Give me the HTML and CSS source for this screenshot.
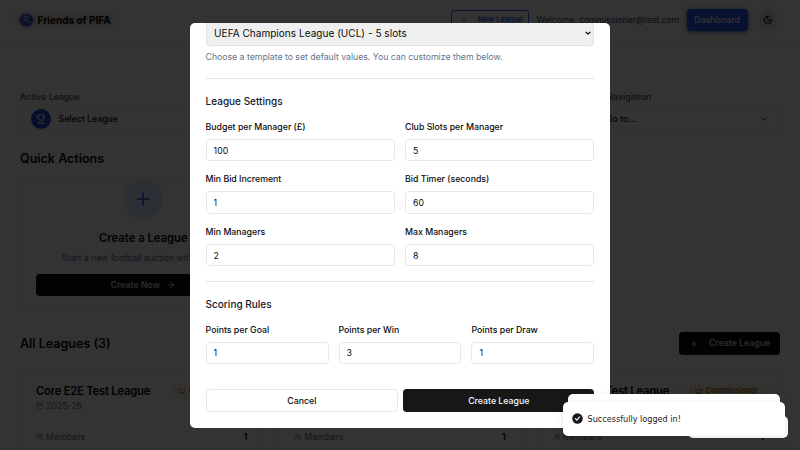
FILE: index.html
```html
<!DOCTYPE html>
<html lang="en">
<head>
<meta charset="utf-8">
<title>Friends of PIFA</title>
<link rel="stylesheet" href="styles.css">
</head>
<body>
<svg class="defs" aria-hidden="true">
  <symbol id="users" viewBox="0 0 24 24"><path d="M18 21a8 8 0 0 0-16 0"/><circle cx="10" cy="8" r="5"/><path d="M22 20c0-3.370-2-6.500-4-8a5 5 0 0 0-.45-8.300"/></symbol>
  <symbol id="logo" viewBox="0 0 24 24"><path d="M16 21v-2a4 4 0 0 0-4-4H6a4 4 0 0 0-4 4v2"/><rect x="5" y="3" width="8" height="8" rx="3"/><path d="M22 21v-2a4 4 0 0 0-3-3.870M16 3.130a4 4 0 0 1 0 7.750"/></symbol>
  <symbol id="trophy" viewBox="0 0 24 24"><path d="M6 9H4.500a2.500 2.500 0 0 1 0-5H6M18 9h1.500a2.500 2.500 0 0 0 0-5H18M4 22h16M10 14.660V17c0 .55-.47.98-.97 1.210C7.850 18.750 7 20.240 7 22M14 14.660V17c0 .55.47.98.97 1.210C16.150 18.750 17 20.240 17 22M18 2H6v7a6 6 0 0 0 12 0V2Z"/></symbol>
  <symbol id="plus" viewBox="0 0 24 24"><path d="M5 12h14M12 5v14"/></symbol>
  <symbol id="arrow" viewBox="0 0 24 24"><path d="M5 12h14M12 5l7 7-7 7"/></symbol>
  <symbol id="chevron" viewBox="0 0 24 24"><path d="m6 9 6 6 6-6"/></symbol>
  <symbol id="moon" viewBox="0 0 24 24"><path d="M12 3a6 6 0 0 0 9 9 9 9 0 1 1-9-9Z"/></symbol>
  <symbol id="calendar" viewBox="0 0 24 24"><path d="M8 2v4M16 2v4M3 10h18"/><rect x="3" y="4" width="18" height="18" rx="2"/></symbol>
  <symbol id="crown" viewBox="0 0 24 24"><path d="m2 6 5 5 5-8 5 8 5-5-3 12H5ZM5 21h14"/></symbol>
</svg>

<div class="page">
  <header class="header">
    <div class="brand"><span class="brand-mark"><svg><use href="#logo"/></svg></span><span>Friends of PIFA</span></div>
    <div class="header-actions">
      <span class="btn-outline"><svg><use href="#plus"/></svg>New League</span>
      <span class="welcome">Welcome, commissioner@test.com</span>
      <span class="btn-primary">Dashboard</span>
      <span class="theme"><svg><use href="#moon"/></svg></span>
    </div>
  </header>
  <main class="main">
    <div class="pickers">
      <div class="picker picker-wide">
        <div class="picker-label">Active League</div>
        <div class="picker-box"><span class="trophy"><svg><use href="#trophy"/></svg></span>Select League</div>
      </div>
      <div class="picker picker-nav">
        <div class="picker-label">Quick Navigation</div>
        <div class="picker-box"><span class="goto">Go to...</span><svg class="chev"><use href="#chevron"/></svg></div>
      </div>
    </div>
    <h2 class="section-title">Quick Actions</h2>
    <div class="actions">
      <div class="action-card">
        <span class="action-icon"><svg><use href="#plus"/></svg></span>
        <h3>Create a League</h3>
        <p>Start a new football auction with friends</p>
        <span class="btn-dark">Create Now<svg><use href="#arrow"/></svg></span>
      </div>
    </div>
    <div class="leagues-head">
      <h2 class="section-title">All Leagues (3)</h2>
      <span class="btn-dark create"><svg><use href="#plus"/></svg>Create League</span>
    </div>
    <div class="leagues">
      <div class="league">
        <div class="league-top"><h3>Core E2E Test League</h3><span class="badge"><svg><use href="#crown"/></svg>Commissioner</span></div>
        <div class="season"><svg><use href="#calendar"/></svg>2025-26</div>
        <div class="members"><svg><use href="#users"/></svg>Members<b>1</b></div>
      </div>
      <div class="league">
        <div class="league-top"></div>
        <div class="season"></div>
        <div class="members"><svg><use href="#users"/></svg>Members<b>1</b></div>
      </div>
      <div class="league">
        <div class="league-top"><h3>Core UCL Test League</h3><span class="badge"><svg><use href="#crown"/></svg>Commissioner</span></div>
        <div class="season"></div>
        <div class="members"><svg><use href="#users"/></svg>Members<b>1</b></div>
      </div>
    </div>
  </main>
</div>

<div class="overlay">
  <div class="modal">
    <div class="template"><span>UEFA Champions League (UCL) - 5 slots</span><svg viewBox="0 0 10 6"><path d="M1 1l4 4 4-4"/></svg></div>
    <p class="hint">Choose a template to set default values. You can customize them below.</p>
    <section class="group">
      <h4>League Settings</h4>
      <div class="fields two">
        <label class="field"><span>Budget per Manager (£)</span><input value="100"></label>
        <label class="field"><span>Club Slots per Manager</span><input value="5"></label>
        <label class="field"><span>Min Bid Increment</span><input value="1"></label>
        <label class="field"><span>Bid Timer (seconds)</span><input value="60"></label>
        <label class="field"><span>Min Managers</span><input value="2"></label>
        <label class="field"><span>Max Managers</span><input value="8"></label>
      </div>
    </section>
    <section class="group scoring">
      <h4>Scoring Rules</h4>
      <div class="fields three">
        <label class="field"><span>Points per Goal</span><input value="1"></label>
        <label class="field"><span>Points per Win</span><input value="3"></label>
        <label class="field"><span>Points per Draw</span><input value="1"></label>
      </div>
    </section>
    <div class="modal-actions">
      <button class="cancel">Cancel</button>
      <button class="submit">Create League</button>
    </div>
  </div>
</div>

<div class="corner-badge"></div>
<div class="toast-back"></div>
<div class="toast">
  <svg viewBox="0 0 20 20"><circle cx="10" cy="10" r="9.500" fill="#171717" stroke="none"/><path d="M6 10.300l2.800 2.700 5-6" fill="none" stroke="#fff" stroke-width="2"/></svg>
  <span>Successfully logged in!</span>
</div>
</body>
</html>
```
FILE: styles.css
```css
* { box-sizing: border-box; }
html { font-size: 10px; }
body {
  margin: 0;
  width: 800px;
  height: 450px;
  overflow: hidden;
  font-family: Inter, "Liberation Sans", sans-serif;
  font-size: 8.750px;
  line-height: 12.500px;
  color: #0a0a0a;
  background: #fff;
}
h2, h3, h4, p { margin: 0; }
svg { fill: none; stroke: currentColor; stroke-width: 2; stroke-linecap: round; stroke-linejoin: round; flex: none; }
.defs { position: absolute; width: 0; height: 0; }

.page { height: 450px; overflow: hidden; background: #fcfcfc; }
.header {
  display: flex;
  align-items: center;
  justify-content: space-between;
  height: 40.500px;
  padding: 0 20px;
  border-bottom: 1px solid #f0f0f3;
}
.brand { display: flex; align-items: center; gap: 5px; font-size: 10px; font-weight: 700; text-shadow: 0 0 6px rgba(0,0,0,.45); }
.brand-mark {
  display: flex; align-items: center; justify-content: center;
  width: 12.500px; height: 12.500px; border-radius: 50%;
  background: #2450c8; color: #fff; box-shadow: 0 0 5px #4165c8;
}
.brand-mark svg { width: 9px; height: 9px; }
.header-actions { display: flex; align-items: center; }
.btn-outline {
  display: flex; align-items: center; gap: 10px;
  width: 78px; height: 20px; padding-left: 8px;
  border: 1px solid #2563eb; border-radius: 3px;
  color: #2563eb; font-size: 7.500px; font-weight: 600;
}
.btn-outline svg { width: 8px; height: 8px; }
.welcome { margin-left: 7.500px; width: 143px; color: #475569; letter-spacing: -.1px; white-space: nowrap; }
.btn-primary {
  display: flex; align-items: center; justify-content: center;
  width: 61px; height: 22.500px; margin-left: 7px;
  border-radius: 3.750px; background: #1f5af0; color: #fff; font-weight: 500;
  box-shadow: 0 1px 4px #3b63c0;
}
.theme { display: flex; margin: 0 7.500px 0 15px; border-radius: 50%; box-shadow: 0 0 8px 2px rgba(0,0,0,.2); background: rgba(0,0,0,.2); }
.theme svg { width: 10px; height: 10px; }

.main { padding: 50px 20px 0; }
.pickers { display: flex; justify-content: space-between; }
.picker-wide { width: 545px; }
.picker-nav { width: 200px; }
.picker-label { height: 17px; font-weight: 500; color: #475569; }
.picker-box {
  display: flex; align-items: center; gap: 7.500px;
  height: 22.500px; padding: 0 10px;
  border: 1px solid #ececf0; border-radius: 3.750px;
  font-weight: 500;
}
.trophy { display: flex; align-items: center; justify-content: center; width: 20px; height: 20px; border-radius: 50%; background: #1d4ed8; color: #fff; }
.trophy svg { width: 10px; height: 10px; }
.goto { padding-left: 15px; font-weight: 500; }
.chev { width: 10px; height: 10px; margin-left: auto; }

.section-title { font-size: 12.500px; line-height: 17.500px; font-weight: 600; }
.pickers + .section-title { margin-top: 19.750px; }
.actions { display: grid; grid-template-columns: repeat(3, 1fr); gap: 10px; margin-top: 10px; }
.action-card {
  display: flex; flex-direction: column; align-items: center;
  height: 134px; padding: .5px 15px 0;
  border: 1px solid #eceef1; border-radius: 5px; background: #fff;
}
.action-icon { display: flex; align-items: center; justify-content: center; width: 40px; height: 40px; border-radius: 50%; background: #dbeafe; color: #1d5cf0; }
.action-icon svg { width: 20px; height: 20px; }
.action-card h3 { margin-top: 10.750px; font-size: 11.250px; line-height: 17.500px; font-weight: 600; }
.action-card p { margin-top: 5px; color: #64748b; letter-spacing: -.03px; }
.btn-dark {
  display: flex; align-items: center; justify-content: center; gap: 6px;
  height: 22.500px; border-radius: 3.750px;
  background: #0d0d0d; color: #e5e5e5; font-weight: 500;
}
.btn-dark svg { width: 10px; height: 10px; }
.action-card .btn-dark { align-self: stretch; margin-top: 9.250px; }
.leagues-head { display: flex; align-items: center; justify-content: space-between; margin-top: 21px; }
.create { width: 101px; gap: 10px; }
.leagues { display: grid; grid-template-columns: repeat(3, 1fr); gap: 15px; margin-top: 15px; }
.league { height: 140px; padding: 12.250px 15px; border: 1px solid #eceef1; border-radius: 6px; background: #fff; }
.league-top { display: flex; align-items: center; justify-content: space-between; height: 16px; }
.league-top h3 { font-size: 11.250px; font-weight: 600; letter-spacing: -.02em; white-space: nowrap; }
.badge {
  display: flex; align-items: center; gap: 3px;
  height: 13px; padding: 0 5px; border-radius: 4px;
  border: 1px solid #fdf0d4; background: #fdf3dc; color: #a8620c;
  font-size: 7.500px; font-weight: 600;
}
.badge svg { width: 7.500px; height: 7.500px; }
.season { display: flex; align-items: center; gap: 2.500px; height: 12.500px; margin-top: .750px; color: #64748b; }
.members { display: flex; align-items: center; gap: 2.500px; margin-top: 18.500px; color: #64748b; }
.season svg, .members svg { width: 7.500px; height: 7.500px; }
.members b { margin-left: auto; font-weight: 600; color: #0a0a0a; }

.overlay {
  position: absolute; inset: 0;
  display: flex; align-items: center; justify-content: center;
  background: rgba(0,0,0,.8);
}
.modal { width: 420px; height: 405px; padding: 0 15.600px; border-radius: 5px; overflow: hidden; background: #fff; }
.template {
  display: flex; align-items: center; justify-content: space-between;
  height: 23.500px; padding: 0 2px 1px 7.500px;
  border: 1px solid #e2e2e2; border-top: 0; border-radius: 0 0 3.750px 3.750px;
  background: #efefef; font-size: 10px; letter-spacing: .04px;
}
.template svg { width: 6px; height: 4px; stroke-linecap: butt; }
.hint { padding-top: 5px; height: 18px; color: #64748b; letter-spacing: -.03px; }
.group { margin-top: 14px; padding-top: 15px; border-top: 1px solid #e5e5e5; }
.scoring { margin-top: 15px; }
.group h4 { font-size: 10px; line-height: 15px; font-weight: 500; color: #111827; }
.fields { display: grid; gap: 11.750px 10px; margin-top: 11.500px; }
.two { grid-template-columns: repeat(2, 1fr); }
.three { grid-template-columns: repeat(3, 1fr); }
.field { display: block; min-width: 0; height: 40.750px; font-weight: 500; }
.field span { display: block; height: 18.250px; padding-top: .250px; }
.scoring .field span { height: 17.750px; }
.field input {
  display: block;
  width: 100%; height: 22.500px; padding: 1px 7px 0;
  border: 1px solid #e8e8e8; border-radius: 3.750px; outline: 0;
  background: #fff; color: #0a0a0a; font: 400 8.750px Inter, sans-serif;
}
.modal-actions { display: flex; gap: 5px; margin-top: 24.500px; }
.modal-actions button { height: 22.500px; padding: 1px 0 0; border-radius: 3.750px; font: 500 8.750px Inter, sans-serif; }
.cancel { width: 192.500px; border: 1px solid #e8e8e8; background: #fff; color: #0a0a0a; }
.submit { flex: 1; border: 0; background: #171717; color: #fafafa; }

.corner-badge { position: absolute; left: 688px; top: 416px; width: 99.500px; height: 21.500px; border-radius: 5px; background: #fff; }
.toast-back { position: absolute; left: 568px; top: 394px; width: 211.500px; height: 34px; border-radius: 5px; background: #fff; box-shadow: 0 2px 7px rgba(0,0,0,.1); }
.toast {
  position: absolute; left: 562.500px; top: 402px; width: 222.500px; height: 33.500px;
  display: flex; align-items: center; gap: 5px; padding: 0 9px;
  border-radius: 5px; background: #fff; box-shadow: 0 2px 7px rgba(0,0,0,.1);
  font: 500 8.125px "DejaVu Sans", sans-serif; color: #171717;
}
.toast svg { width: 11px; height: 11px; }
```
